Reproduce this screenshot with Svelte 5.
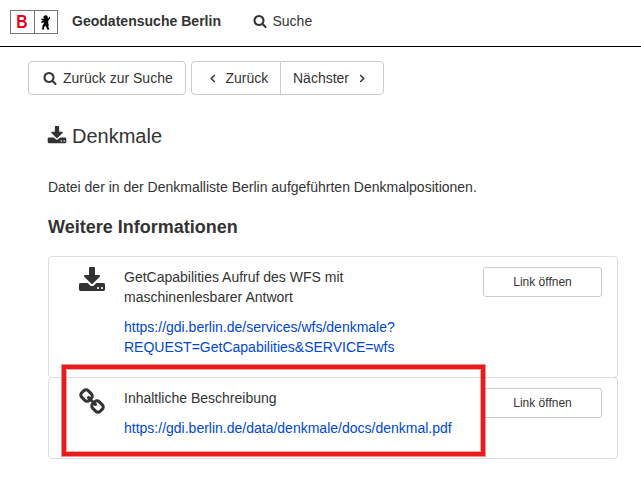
<script>
  const entries = [
    {
      icon: 'download',
      text: 'GetCapabilities Aufruf des WFS mit maschinenlesbarer Antwort',
      link: ['https://gdi.berlin.de/services/wfs/denkmale?', 'REQUEST=GetCapabilities&SERVICE=wfs'],
    },
    {
      icon: 'chain',
      text: 'Inhaltliche Beschreibung',
      link: ['https://gdi.berlin.de/data/denkmale/docs/denkmal.pdf'],
    },
  ];
  const paths = {
    search:
      'M1216 832q0-185-131.5-316.5t-316.5-131.5-316.5 131.5-131.5 316.5 131.5 316.5 316.5 131.5 316.5-131.5 131.5-316.5zm512 832q0 52-38 90t-90 38q-54 0-90-38l-343-342q-179 124-399 124-143 0-273.5-55.5t-225-150-150-225-55.5-273.5 55.5-273.5 150-225 225-150 273.5-55.5 273.5 55.5 225 150 150 225 55.5 273.5q0 220-124 399l343 343q37 37 37 90z',
    download:
      'M1344 1344q0-26-19-45t-45-19-45 19-19 45 19 45 45 19 45-19 19-45zm256 0q0-26-19-45t-45-19-45 19-19 45 19 45 45 19 45-19 19-45zm128-224v320q0 40-28 68t-68 28h-1472q-40 0-68-28t-28-68v-320q0-40 28-68t68-28h465l135 136q58 56 136 56t136-56l136-136h464q40 0 68 28t28 68zm-325-569q17 41-14 70l-448 448q-18 19-45 19t-45-19l-448-448q-31-29-14-70 17-39 59-39h256v-448q0-26 19-45t45-19h256q26 0 45 19t19 45v448h256q42 0 59 39z',
    chain:
      'M1520 1216q0-40-28-68l-208-208q-28-28-68-28-42 0-72 32 3 3 19 18.5t21.5 21.5 15 19 13 25.5 3.5 27.5q0 40-28 68t-68 28q-15 0-27.5-3.5t-25.5-13-19-15-21.5-21.5-18.5-19q-33 31-33 73 0 40 28 68l206 207q27 27 68 27 40 0 68-26l147-146q28-28 28-67zm-703-705q0-40-28-68l-206-207q-28-28-68-28-39 0-68 27l-147 146q-28 28-28 67 0 40 28 68l208 208q27 27 68 27 42 0 72-31-3-3-19-18.5t-21.5-21.5-15-19-13-25.5-3.5-27.5q0-40 28-68t68-28q15 0 27.5 3.5t25.5 13 19 15 21.5 21.5 18.5 19q33-31 33-73zm895 705q0 120-85 203l-147 146q-83 83-203 83-121 0-204-85l-206-207q-83-83-83-203 0-123 88-209l-88-88q-86 88-208 88-120 0-204-84l-208-208q-84-84-84-204t85-203l147-146q83-83 203-83 121 0 204 85l206 207q83 83 83 203 0 123-88 209l88 88q86-88 208-88 120 0 204 84l208 208q84 84 84 204z',
  };
</script>

{#snippet icon(name, size)}
  <svg class="icon" width={size} height={size} viewBox="0 0 1792 1792" aria-hidden="true"><path d={paths[name]} /></svg>
{/snippet}

<div class="page">
  <header>
    <div class="logo">
      <span class="b"><b>B</b></span>
      <span class="bear">
        <svg width="9" height="15" viewBox="0 0 9 15" aria-hidden="true">
          <path d="M3.2 1L4.4.2 6 .6 6.8 2 6.8 3.4 7.8 3 8 1.6 9 2 8.8 4 7.4 5.6 7.2 8.2 7.8 10 7.2 11.6 8 13.4 8.4 14.6H6.2L5.2 11.8 4.2 11 3 12.6 3.2 14.4 1 14.6.6 13.8 1.4 13.2 1.4 11 2.6 8.8 3 7.4 1.2 7.8 0 7.4.2 6.4 1.8 6 2.8 5.2 1.4 5.4.2 4.6.4 3.8 2.6 3.8 3.4 3.2 2.4 2.8 2.2 2Z" />
        </svg>
      </span>
    </div>
    <strong>Geodatensuche Berlin</strong>
    <a class="nav" href="#suche">{@render icon('search', 14)}<span>Suche</span></a>
  </header>

  <nav class="toolbar">
    <button class="btn back">{@render icon('search', 14)}<span>Zurück zur Suche</span></button>
    <div class="group">
      <button class="btn prev">
        <svg width="6" height="9" viewBox="0 0 6 9"><path class="angle" d="M4.8.9L1.3 4.5 4.8 8.1" /></svg>
        <span>Zurück</span>
      </button>
      <button class="btn next">
        <span>Nächster</span>
        <svg width="6" height="9" viewBox="0 0 6 9"><path class="angle" d="M1.2.9L4.7 4.5 1.2 8.1" /></svg>
      </button>
    </div>
  </nav>

  <main>
    <h1>{@render icon('download', 20)}<span>Denkmale</span></h1>
    <p class="intro">Datei der in der Denkmalliste Berlin aufgeführten Denkmalpositionen.</p>
    <h2>Weitere Informationen</h2>
    <ul>
      {#each entries as entry, i}
        <li class:last={i === 1}>
          <div class="symbol">{@render icon(entry.icon, 28)}</div>
          <div class="info">
            <p>{entry.text}</p>
            <a href="#link">{#each entry.link as part, n}{#if n}<br />{/if}{part}{/each}</a>
          </div>
          <button class="open">Link öffnen</button>
          {#if i === 1}<div class="marker"></div>{/if}
        </li>
      {/each}
    </ul>
  </main>
</div>

<style>
  :global(body) {
    background: #fff;
  }
  .page {
    box-sizing: border-box;
    height: 482px;
    overflow: hidden;
    color: #333;
    font: 14px/20px 'Liberation Sans', Arial, sans-serif;
  }
  .icon {
    display: block;
    flex: none;
    fill: #333;
  }
  header {
    box-sizing: border-box;
    height: 47px;
    border-bottom: 1px solid #000;
    padding: 10px 10px 0;
    display: flex;
    align-items: flex-start;
  }
  .logo {
    box-sizing: border-box;
    width: 48px;
    height: 24px;
    border: 1px solid #777;
    display: flex;
    margin-right: 14px;
  }
  .logo span {
    display: flex;
    flex: 1;
    align-items: center;
    justify-content: center;
  }
  .logo .b {
    color: #e8001c;
    font-size: 19px;
    border-right: 1px solid #777;
  }
  .logo b {
    transform: scaleX(0.82);
  }
  .logo svg {
    margin-right: 1px;
  }
  strong {
    line-height: 22px;
    width: 180px;
    white-space: nowrap;
    letter-spacing: 0.02px;
  }
  .nav {
    display: flex;
    padding-top: 1px;
    margin-left: 0.5px;
    gap: 6px;
    color: #333;
    text-decoration: none;
  }
  .nav .icon {
    margin-top: 3px;
  }
  .toolbar {
    display: flex;
    gap: 5px;
    padding: 14px 0 0 28px;
  }
  button {
    box-sizing: border-box;
    background: #fff;
    border: 1px solid #ccc;
    border-radius: 4px;
    color: #333;
    font: inherit;
    padding: 0;
    display: flex;
    align-items: center;
    white-space: nowrap;
  }
  .btn {
    height: 34px;
  }
  .back {
    width: 158px;
    padding-left: 14px;
    gap: 6px;
  }
  .group {
    display: flex;
  }
  .prev {
    width: 90px;
    padding-left: 18px;
    gap: 9.5px;
    border-radius: 4px 0 0 4px;
  }
  .next {
    width: 104px;
    margin-left: -1px;
    padding-left: 12px;
    gap: 10px;
    border-radius: 0 4px 4px 0;
  }
  .angle {
    fill: none;
    stroke: #333;
    stroke-width: 1.5;
  }
  main {
    padding: 29px 23px 0 48px;
  }
  h1 {
    margin: 0;
    display: flex;
    gap: 5px;
    font-size: 20px;
    line-height: 24px;
    font-weight: normal;
  }
  h1 .icon {
    margin: 2px 0 0 -1px;
  }
  .intro {
    margin: 29px 0 0;
  }
  h2 {
    margin: 18px 0 0;
    font-size: 18px;
    line-height: 24px;
  }
  ul {
    margin: 17px 0 0;
    padding: 0;
    list-style: none;
  }
  li {
    box-sizing: border-box;
    position: relative;
    display: flex;
    height: 122px;
    border: 1px solid #ddd;
    border-radius: 4px;
    padding: 10px 15px 0 29px;
  }
  .last {
    height: 82px;
    margin-top: -1px;
  }
  .symbol {
    width: 46px;
  }
  .info {
    width: 290px;
    margin-right: auto;
  }
  .info p {
    margin: 0 0 10px;
  }
  .info a {
    color: #0047d3;
    text-decoration: none;
    white-space: nowrap;
  }
  .open {
    width: 119px;
    height: 30px;
    border-radius: 3px;
    font-size: 12px;
    justify-content: center;
  }
  .marker {
    position: absolute;
    box-sizing: border-box;
    left: 13px;
    top: -13px;
    width: 423px;
    height: 91px;
    border: 4px solid #e81c1c;
    box-shadow:
      0 0 0 1px rgba(232, 28, 28, 0.5),
      inset 0 0 0 1px rgba(232, 28, 28, 0.4);
  }
</style>
